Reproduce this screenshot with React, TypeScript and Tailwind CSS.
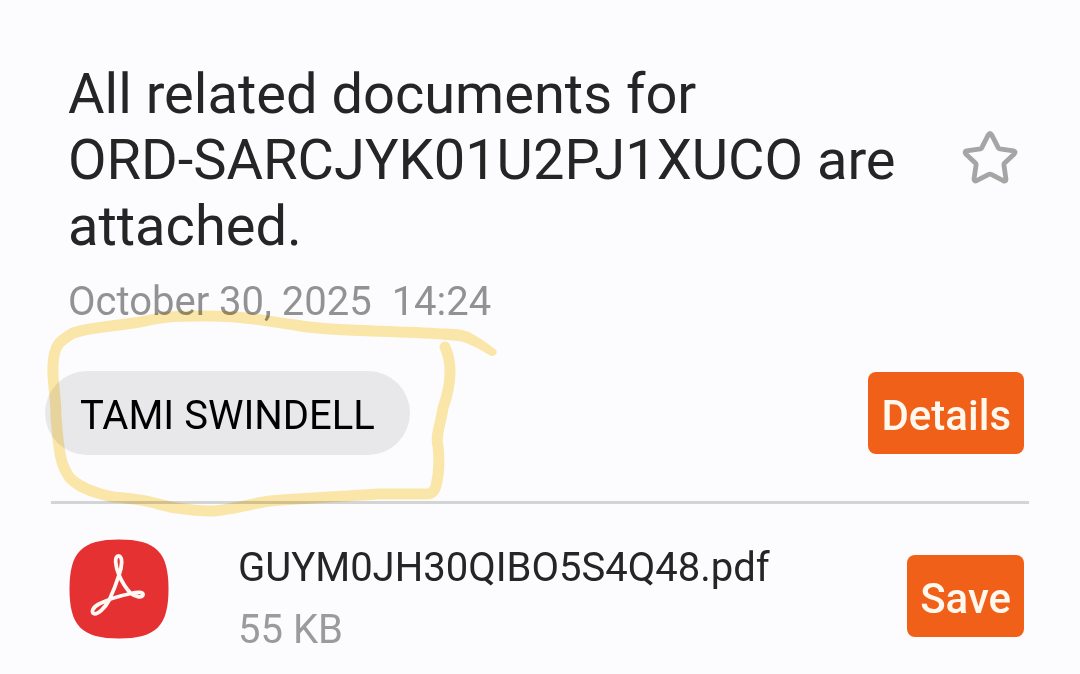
import React from "react";

function StarIcon() {
  return (
    <svg viewBox="0 0 60 60" className="size-[60px]" fill="none" stroke="#a5a5a5" strokeWidth="4.800" strokeLinejoin="round" aria-hidden="true">
      <path d="M28.3 14.2Q30 11.2 31.7 14.2L38.3 27.2Q38.8 28 39.8 28.2L53.6 30.2Q56.2 31 54.2 33.2L44.4 42.6Q43.8 43.2 43.9 44.2L46 58.6Q45.8 61.2 43.2 60L31.2 53.7Q30 53.2 28.8 53.7L16.6 60Q14 61 14 58.4L16.1 44.2Q16.2 43.2 15.6 42.6L5.8 33.2Q4 31 6.600 30.2L20.4 28.2Q21.2 28 21.7 27.2Z" transform="translate(0 -9.300)" />
    </svg>
  );
}

function PdfIcon() {
  return (
    <svg viewBox="0 0 100 100" className="size-[100px] shrink-0" role="img" aria-label="PDF">
      <path fill="#e53131" d="M50 .5C87 .5 99.500 13 99.500 50S87 99.500 50 99.500.5 87 .5 50 13 .5 50 .5Z" />
      <path
        fill="none"
        stroke="#fff8f5"
        strokeWidth="3.8"
        strokeLinecap="round"
        strokeLinejoin="round"
        d="M50 36C46.300 27 45 17 49.500 17S53.300 27 50 36C47.500 44 43.500 54 40.500 60.500C36 69 29.500 75 25.500 74.800C21.500 73.500 23.500 68.500 30 65C39 60.500 52 56.500 62 54.500C69 52.700 75 53 74 56C72.500 59.500 66 57.500 62 54.500C57 49.500 52.500 42 50 36Z"
      />
    </svg>
  );
}

function MarkerStroke() {
  return (
    <svg
      viewBox="0 0 460 210"
      className="pointer-events-none absolute -top-[61px] left-[45px] h-[210px] w-[460px] mix-blend-multiply"
      fill="none"
      stroke="#fee9ab"
      strokeWidth="11"
      strokeLinecap="round"
      strokeLinejoin="round"
      aria-hidden="true"
    >
      <path d="M400 37C409 57 404 81 398 98C396 113 390 126 393 136C395 153 394 164 391 176C388 185 385 184 375 184L332 184C308 186 273 187 225 191C204 194 183 201 165 201C149 201 139 199 125 197C109 193 98 189 68 187C44 182 33 176 25 168C16 156 14 145 11 107C11 83 7 73 8 55C9 34 15 31 28 23C45 17 71 16 95 12C122 5 143 6 165 6C204 6 224 12 250 15C287 22 340 20 398 24Q412 24 418 26" />
      <path d="M398 18.500Q417 19 424 22Q439 30 451 40Q453 43 450 45Q447 47 444 45Q432 37 417 31.500L398 29.500Z" fill="#fee9ab" stroke="none" />
    </svg>
  );
}

const actionClass =
  "flex h-[82px] shrink-0 items-center justify-center rounded-lg bg-[#f16018] px-[13px] pt-[6px] text-[42px] leading-[48px] font-medium text-[#fff8ee]";

export default function App() {
  return (
    <main className="min-h-screen bg-[#fcfcfe] pt-[61px] font-['Roboto',sans-serif] text-[#252525]">
      <header className="flex items-center justify-between gap-6 pr-[60px] pl-[68px]">
        <h1 className="max-w-[840px] text-[56px] leading-[66px] font-normal">
          All related documents for
          <br />
          ORD-SARCJYK01U2PJ1XUCO are attached.
        </h1>
        <button type="button" aria-label="Add to favorites" className="shrink-0">
          <StarIcon />
        </button>
      </header>

      <p className="mt-[19px] pl-[68px] text-[40px] leading-[48px] whitespace-pre text-[#929292]">
        <time dateTime="2025-10-30T14:24">October 30, 2025  14:24</time>
      </p>

      <div className="relative mt-[45px] flex items-center justify-between pr-14 pl-[45px]">
        <button type="button" className="flex h-[84px] items-center rounded-full bg-[#e8e8ea] px-[35px] pt-[6px] text-[40px] leading-[48px] whitespace-nowrap text-black">
          TAMI SWINDELL
        </button>
        <button type="button" className={actionClass}>Details</button>
        <MarkerStroke />
      </div>

      <hr className="mx-[51px] mt-[46px] border-t-[3px] border-[#d3d4d6]" />

      <section className="flex items-start pt-[35px] pr-14 pl-[69px]">
        <PdfIcon />
        <div className="ml-[69px] min-w-0 flex-1 pt-[5px]">
          <h2 className="text-[40px] leading-[48px] font-normal">GUYM0JH30QIBO5S4Q48.pdf</h2>
          <p className="mt-[14px] text-[40px] leading-[48px] text-[#9b9b9b]">55 KB</p>
        </div>
        <div className="pt-4">
          <button type="button" className={actionClass}>Save</button>
        </div>
      </section>
    </main>
  );
}
